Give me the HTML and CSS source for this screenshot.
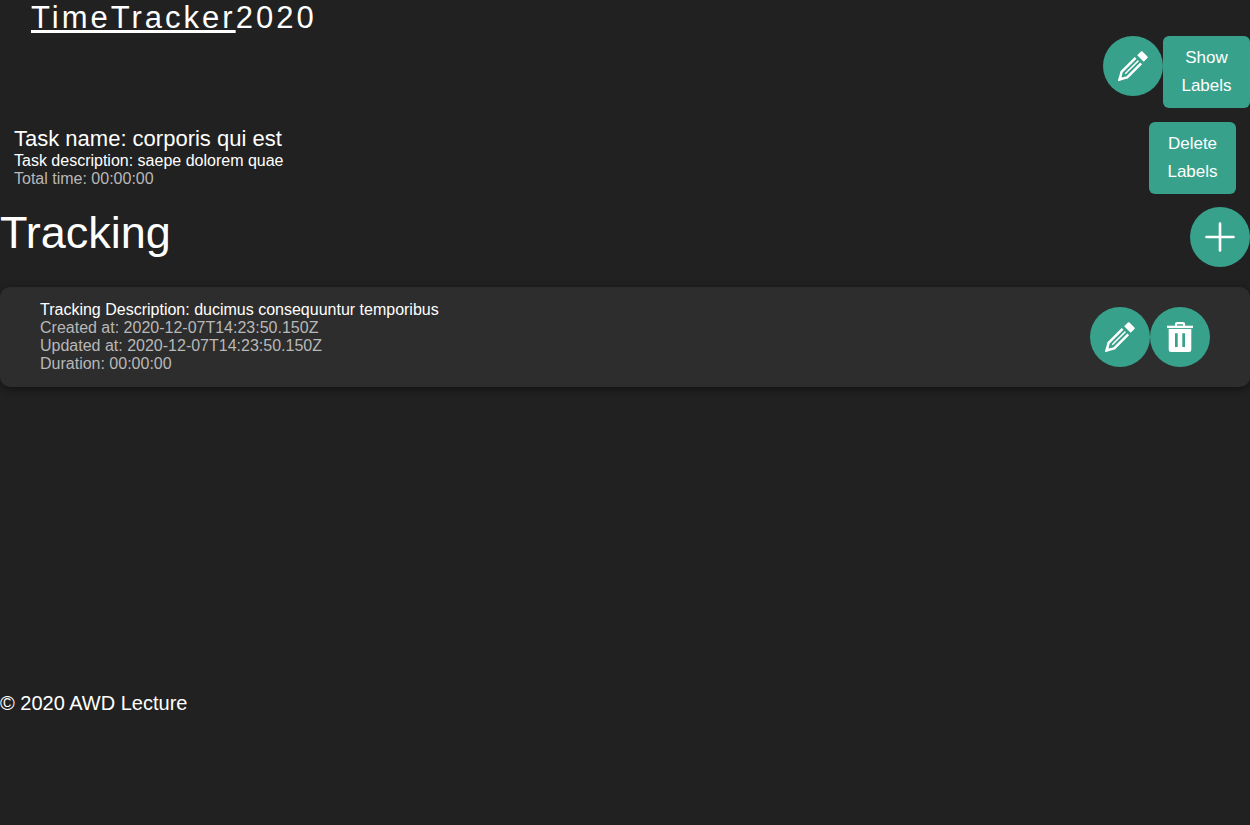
FILE: index.html
```html
<!DOCTYPE html>
<html lang="en">
<head>
<meta charset="utf-8">
<title>TimeTracker2020</title>
<link rel="stylesheet" href="styles.css">
</head>
<body>
<svg class="symbols" aria-hidden="true">
  <symbol id="pencil" viewBox="0 0 30 30">
    <path fill="currentColor" d="M22.9 0.6Q23.7 -0.1 24.5 0.6L29.4 5.5Q30.1 6.3 29.4 7.1L25.7 10.8L19.2 4.3Z"/>
    <path fill="none" stroke="currentColor" stroke-width="2.5" d="M17.6 6.8L3.6 20.8L1.7 28.3L9.2 26.4L23.2 12.4"/>
    <path fill="none" stroke="currentColor" stroke-width="1.5" d="M20.4 9.6L7.2 22.8"/>
    <path fill="currentColor" d="M0 30L1.3 25L5 28.7Z"/>
  </symbol>
  <symbol id="trash" viewBox="0 0 30 30">
    <path fill="none" stroke="currentColor" stroke-width="2.2" d="M11 4.2V2Q11 1.1 12 1.1H18Q19 1.1 19 2V4.2"/>
    <path fill="currentColor" d="M2 3.7H28V6.1H2Z"/>
    <path fill="currentColor" fill-rule="evenodd" d="M3.7 7.1H26.3V27.5Q26.3 30 23.8 30H6.2Q3.7 30 3.7 27.5ZM10 11.3V25H12.7V11.3ZM17.3 11.3V25H20V11.3Z"/>
  </symbol>
  <symbol id="plus" viewBox="0 0 30 30">
    <path fill="none" stroke="currentColor" stroke-width="2.6" stroke-linecap="round" d="M15 1.5V28.5M1.5 15H28.5"/>
  </symbol>
</svg>
<header class="header">
  <h1 class="logo"><span class="logo-name">TimeTracker</span>2020</h1>
</header>
<main>
  <div class="toolbar">
    <button class="round" type="button" aria-label="Edit task"><svg class="icon"><use href="#pencil"/></svg></button>
    <button class="label-button" type="button">Show Labels</button>
  </div>
  <section class="task">
    <div class="task-info">
      <h2 class="task-name">Task name: corporis qui est</h2>
      <p>Task description: saepe dolorem quae</p>
      <p class="muted">Total time: 00:00:00</p>
    </div>
    <button class="label-button" type="button">Delete Labels</button>
  </section>
  <section>
    <div class="tracking-head">
      <h2 class="tracking-title">Tracking</h2>
      <button class="round" type="button" aria-label="Add tracking"><svg class="icon"><use href="#plus"/></svg></button>
    </div>
    <article class="card">
      <div>
        <p>Tracking Description: ducimus consequuntur temporibus</p>
        <p class="muted">Created at: 2020-12-07T14:23:50.150Z</p>
        <p class="muted">Updated at: 2020-12-07T14:23:50.150Z</p>
        <p class="muted">Duration: 00:00:00</p>
      </div>
      <div class="actions">
        <button class="round" type="button" aria-label="Edit tracking"><svg class="icon"><use href="#pencil"/></svg></button>
        <button class="round" type="button" aria-label="Delete tracking"><svg class="icon"><use href="#trash"/></svg></button>
      </div>
    </article>
  </section>
</main>
<footer class="footer">© 2020 AWD Lecture</footer>
</body>
</html>
```
FILE: styles.css
```css
* { box-sizing: border-box; margin: 0; padding: 0; }
body {
  display: grid;
  grid-template-rows: auto 1fr auto;
  min-height: 100vh;
  background: #212121;
  color: #fff;
  font: 16px/18px "Liberation Sans", Arial, sans-serif;
}
.symbols { position: absolute; width: 0; height: 0; }
.header { padding: 0 31px; }
.logo { font-size: 31px; font-weight: 400; line-height: 36px; letter-spacing: 3px; }
.logo-name { text-decoration: underline; text-decoration-thickness: 3px; text-decoration-skip-ink: none; }
.toolbar { display: flex; justify-content: flex-end; align-items: flex-start; }
.round {
  display: flex;
  align-items: center;
  justify-content: center;
  width: 60px;
  height: 60px;
  border: 0;
  border-radius: 50%;
  background: #37a18b;
  color: #fff;
  cursor: pointer;
}
.icon { width: 30px; height: 30px; overflow: visible; }
.label-button {
  width: 87px;
  padding: 8px 16px;
  border: 0;
  border-radius: 6px;
  background: #37a18b;
  color: #fff;
  font: inherit;
  font-size: 17px;
  line-height: 28px;
  cursor: pointer;
}
.task { display: flex; justify-content: space-between; padding: 14px 14px 13px; }
.task-info { padding-top: 4px; }
.task-name { font-size: 22px; font-weight: 400; line-height: 26px; }
.muted { color: #b8b8b8; }
.tracking-head { display: flex; justify-content: space-between; align-items: flex-start; }
.tracking-title { font-size: 45px; font-weight: 400; line-height: 52px; }
.card {
  display: flex;
  justify-content: space-between;
  align-items: center;
  margin-top: 20px;
  padding: 14px 40px;
  border-radius: 10px;
  background: #2d2d2d;
  box-shadow: 0 2px 8px rgba(0, 0, 0, 0.5);
}
.actions { display: flex; }
.footer { padding-bottom: 110px; font-size: 20px; line-height: 24px; }
```
